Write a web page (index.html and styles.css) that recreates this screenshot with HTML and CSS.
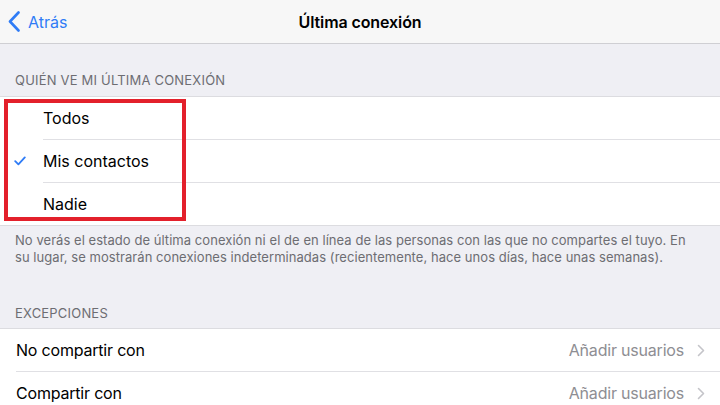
FILE: index.html
```html
<!DOCTYPE html>
<html lang="es">
<head>
  <meta charset="UTF-8">
  <meta name="viewport" content="width=device-width, initial-scale=1.0">
  <title>Última conexión</title>
  <link rel="stylesheet" href="styles.css">
</head>
<body>
  <div class="navbar">
    <div class="back">
      <svg class="back-icon" width="12" height="21" viewBox="0 0 12 21">
        <path d="M10.5 1.5 L2 10.5 L10.5 19.5" fill="none" stroke="#2f7cf6" stroke-width="2.6" stroke-linecap="round" stroke-linejoin="round"/>
      </svg>
      <span>Atrás</span>
    </div>
    <div class="nav-title">Última conexión</div>
  </div>

  <div class="section-header first">QUIÉN VE MI ÚLTIMA CONEXIÓN</div>
  <div class="list">
    <div class="row option">
      <span class="check"></span>
      <span class="row-label">Todos</span>
    </div>
    <div class="row option">
      <span class="check">
        <svg width="12" height="10" viewBox="0 0 12 10">
          <path d="M1.2 5.2 L4.4 8.4 L10.8 1.4" fill="none" stroke="#2f7cf6" stroke-width="1.8" stroke-linecap="round" stroke-linejoin="round"/>
        </svg>
      </span>
      <span class="row-label">Mis contactos</span>
    </div>
    <div class="row option">
      <span class="check"></span>
      <span class="row-label">Nadie</span>
    </div>
    <div class="highlight"></div>
  </div>
  <div class="section-footer">
    No verás el estado de última conexión ni el de en línea de las personas con las que no compartes el tuyo. En<br>
    su lugar, se mostrarán conexiones indeterminadas (recientemente, hace unos días, hace unas semanas).
  </div>

  <div class="section-header">EXCEPCIONES</div>
  <div class="list">
    <div class="row link">
      <span class="row-label">No compartir con</span>
      <span class="row-detail">Añadir usuarios</span>
      <svg class="chevron" width="8" height="13" viewBox="0 0 8 13">
        <path d="M1.5 1.5 L6.5 6.5 L1.5 11.5" fill="none" stroke="#c4c4c9" stroke-width="1.6" stroke-linecap="round" stroke-linejoin="round"/>
      </svg>
    </div>
    <div class="row link">
      <span class="row-label">Compartir con</span>
      <span class="row-detail">Añadir usuarios</span>
      <svg class="chevron" width="8" height="13" viewBox="0 0 8 13">
        <path d="M1.5 1.5 L6.5 6.5 L1.5 11.5" fill="none" stroke="#c4c4c9" stroke-width="1.6" stroke-linecap="round" stroke-linejoin="round"/>
      </svg>
    </div>
  </div>
</body>
</html>
```

FILE: styles.css
```css
body {
  margin: 0;
  background: #efeff4;
  font-family: Inter, "Noto Sans", sans-serif;
  color: #000;
  width: 720px;
  height: 405px;
  overflow: hidden;
}

.navbar {
  height: 43px;
  background: #f7f7f7;
  border-bottom: 1px solid #cfcfd3;
  display: flex;
  align-items: center;
  justify-content: center;
  position: relative;
}

.back {
  position: absolute;
  left: 8px;
  top: 0;
  height: 43px;
  display: flex;
  align-items: center;
  gap: 8px;
  color: #2f7cf6;
  font-size: 16px;
}

.nav-title {
  font-size: 16px;
  font-weight: 600;
  letter-spacing: -0.1px;
}

.section-header {
  padding: 27px 15px 7px;
  font-size: 13px;
  color: #6d6d72;
  line-height: 18px;
  letter-spacing: 0.2px;
}

.list {
  background: #fff;
  border-top: 1px solid #dcdce0;
  border-bottom: 1px solid #dcdce0;
  position: relative;
}

.row {
  height: 42px;
  display: flex;
  align-items: center;
  font-size: 16px;
  position: relative;
}

.row + .row {
  border-top: 1px solid transparent;
}

.row + .row::before {
  content: "";
  position: absolute;
  top: -1px;
  right: 0;
  border-top: 1px solid #e0e0e4;
}

.option + .option::before {
  left: 43px;
}

.link + .link::before {
  left: 16px;
}

.check {
  width: 43px;
  display: flex;
  justify-content: center;
  padding-right: 4px;
  box-sizing: border-box;
}

.link {
  padding: 0 15px 0 16px;
  letter-spacing: -0.2px;
}

.link .row-label {
  flex: 1;
}

.row-detail {
  color: #8e8e93;
  margin-right: 13px;
}

.highlight {
  position: absolute;
  left: 4px;
  top: 2px;
  width: 174px;
  height: 114px;
  border: 4px solid #e3202b;
}

.section-footer {
  padding: 6px 15px 0;
  font-size: 13px;
  line-height: 17px;
  color: #6d6d72;
  letter-spacing: 0.05px;
}

.section-footer + .section-header {
  padding-top: 38px;
  padding-bottom: 6px;
}
```
